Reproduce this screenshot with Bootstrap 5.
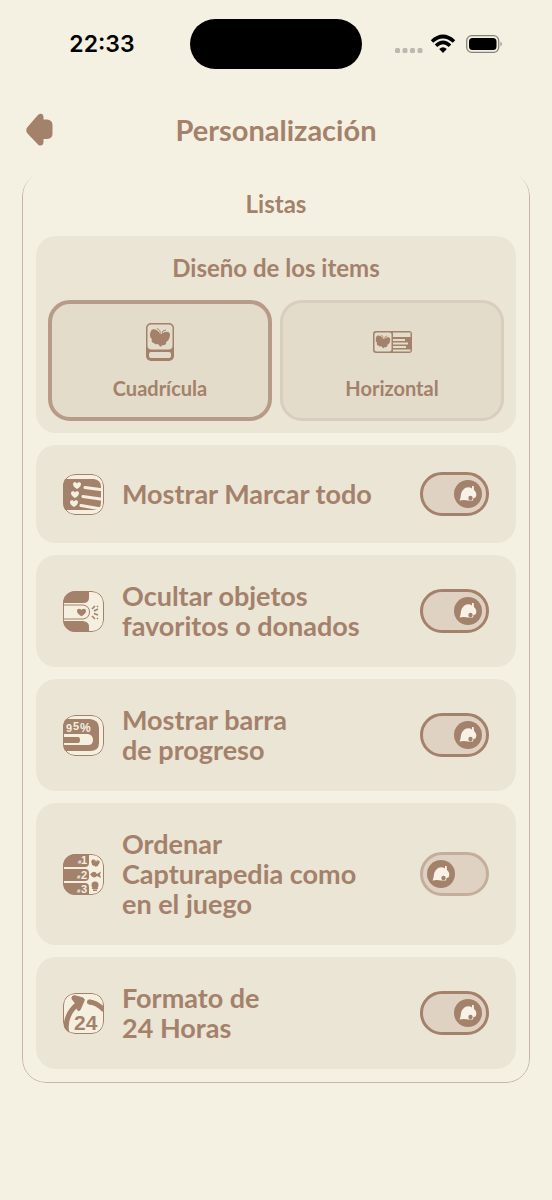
<!DOCTYPE html>
<html lang="es">
<head>
<meta charset="utf-8">
<meta name="viewport" content="width=device-width, initial-scale=1">
<title>Personalización</title>
<link href="https://cdn.jsdelivr.net/npm/bootstrap@5.3.0/dist/css/bootstrap.min.css" rel="stylesheet">
<style>
:root{--paper:#f5f1e2;--sand:#ebe5d5;--brown:#a3816b;--cream:#f5efe0}
body{background:var(--paper);color:var(--brown);font-family:Lato,"Open Sans",sans-serif;font-weight:700;min-height:100vh}
.status{height:88px;color:#000}
.clock{font:600 23px/28px Inter,sans-serif}
.island{width:172px;height:50px;border-radius:25px;background:#000}
.side-l{padding-left:14px}
.side-r{padding-right:16px}
.topbar{height:84px;padding:0 26px}
.topbar h1{font-size:29px;line-height:34px;font-weight:700}
.back{width:30px}
.panel{margin:0 22px;padding:16px 14px 14px}
.panel::before{content:"";position:absolute;inset:0;border:1px solid #c9b5a4;border-radius:24px;pointer-events:none;-webkit-mask-image:linear-gradient(transparent 3px,#000 20px);mask-image:linear-gradient(transparent 3px,#000 20px)}
.panel h2{font-size:24px;line-height:32px;font-weight:700;margin-bottom:16px}
.stack{gap:12px}
.tile{background:var(--sand);border-radius:20px}
.tile-options{padding:16px 12px 12px}
.tile h3{font-size:24px;line-height:32px;font-weight:700;margin-bottom:16px}
.option{height:121px;border:3px solid #d9cdbd;border-radius:22px;background:#e4dcca;font-size:20px;line-height:26px;padding:18px 0 17px;cursor:pointer}
.btn-check:checked + .option{border:4px solid #b79b88;padding:17px 0 16px}
.option svg{height:42px}
.setting{padding:26px 27px;gap:18px;min-height:98px;font-size:27px;line-height:30px;cursor:pointer}
.setting svg{width:41px;height:41px;border-radius:12px;overflow:hidden}
.toggle{appearance:none;width:69px;height:44px;margin:0;border:3px solid #c5ad9b;border-radius:22px;background:#dfd2c2 url("data:image/svg+xml,%3Csvg xmlns='http://www.w3.org/2000/svg' viewBox='0 0 28 28'%3E%3Ccircle cx='14' cy='14' r='14' fill='%23a3816b'/%3E%3Cpath d='M5.500 20.500C7.500 17 6 13 9 10C12 6.500 15.500 7 18 8.500L18 6H19.700L20 10C22.500 12 23 15 21.500 17.500L19.500 18L19 20.500H14Q10 19.500 5.500 20.500Z' fill='%23f7f1e6'/%3E%3Ccircle cx='16.500' cy='18' r='2.200' fill='%23a3816b'/%3E%3C/svg%3E") no-repeat 4px center/28px 28px;cursor:pointer}
.toggle:checked{border-color:var(--brown);background-position:right 4px center}
.st{font-family:"Liberation Sans",sans-serif;font-weight:700;fill:var(--cream)}
</style>
</head>
<body>
<svg class="d-none" aria-hidden="true">
  <defs>
    <symbol id="butterfly" viewBox="0 0 20 19"><path d="M10 6C8 1 2 0 1 3C-1 7 0 10 2 11C1 13 2 15 4 15C5 17 7 16 8 16L10 18.500Q12 19 12 17C15 18 17 15 16 14C19 13 20 9 20 6C19 3 15 3 12 6Z" fill="#a3816b"/><path d="M10 6Q11 2 7 .5M12 6Q12 2 16 2" fill="none" stroke="#a3816b" stroke-width="1"/></symbol>
    <symbol id="heart" viewBox="0 0 8 7"><path d="M4 7C1 5 0 4 0 2C0 0 3-.5 4 1.500C5-.5 8 0 8 2C8 4 7 5 4 7Z"/></symbol>
  </defs>
</svg>

<div class="status d-flex align-items-center">
  <div class="side-l flex-fill w-25 text-center clock">22:33</div>
  <div class="island flex-shrink-0"></div>
  <div class="side-r flex-fill w-25 d-flex justify-content-center">
    <svg width="108" height="22" viewBox="0 0 108 22" role="img" aria-label="Red y batería">
      <g fill="#bdb9ae"><rect y="15" width="5" height="5" rx="1.500"/><rect x="7.500" y="15" width="5" height="5" rx="1.500"/><rect x="15" y="15" width="5" height="5" rx="1.500"/><rect x="22.500" y="15" width="5" height="5" rx="1.500"/></g>
      <g fill="none" stroke="#000" stroke-width="3.600"><path d="M37 8.500Q48 -1.500 59 8.500"/><path d="M41 12.800Q48 6 55 12.800"/></g>
      <path d="M44.200 16Q48 12.500 51.800 16L48 20Z"/>
      <rect x="71.700" y="2.700" width="32" height="16.600" rx="5" fill="none" stroke="#86837b" stroke-width="1.300"/><rect x="74" y="5" width="27.500" height="12" rx="3.500"/><path d="M105.500 8.500Q108 11 105.500 13.500Z" fill="#86837b"/>
    </svg>
  </div>
</div>

<header class="topbar d-flex align-items-center">
  <button type="button" class="back btn p-0 border-0 d-flex" aria-label="Volver">
    <svg width="30" height="36" viewBox="0 0 30 36"><path d="M1.500 15L11.500 3.500C14 .5 17.500 1.500 17.500 5V7.500H21Q26.500 8 26.500 13V22Q26.500 26.500 21 27H17.500V30C17.500 34 13.500 34.500 11.500 32L1.500 21.500Q-1 18 1.500 15Z" fill="#a3816b"/></svg>
  </button>
  <h1 class="flex-fill text-center m-0">Personalización</h1>
  <span class="back"></span>
</header>

<main class="panel position-relative">
  <h2 class="text-center">Listas</h2>
  <form class="stack d-grid">
    <section class="tile tile-options">
      <h3 class="text-center">Diseño de los items</h3>
      <div class="d-flex gap-2">
        <input class="btn-check" type="radio" name="layout" id="grid" checked>
        <label class="option flex-fill w-50 d-flex flex-column align-items-center justify-content-between" for="grid">
          <svg width="30" viewBox="0 0 30 42"><rect x="1" y="2" width="28" height="38" rx="5" fill="#a3816b"/><rect x="2.500" y="3.500" width="25" height="25" rx="4" fill="#e4dcca"/><rect x="4" y="31" width="22" height="6" rx="2" fill="#e4dcca"/><use href="#butterfly" x="5" y="7" width="20" height="19"/></svg>
          Cuadrícula
        </label>
        <input class="btn-check" type="radio" name="layout" id="wide">
        <label class="option flex-fill w-50 d-flex flex-column align-items-center justify-content-between" for="wide">
          <svg width="40" viewBox="0 0 40 42"><rect x="1" y="10" width="39" height="22" rx="3" fill="#a3816b"/><rect x="2.500" y="11.500" width="17" height="19" rx="2" fill="#e4dcca"/><use href="#butterfly" x="3.500" y="13.500" width="15" height="14"/><path d="M21 11.500H38.500V16H21ZM21 18H33V20H21ZM21 21.500H36V23.500H21ZM21 25H34V27H21ZM21 28.500H38.500V30.500H21Z" fill="#e4dcca"/></svg>
          Horizontal
        </label>
      </div>
    </section>

    <label class="tile setting d-flex align-items-center" for="s1">
      <svg class="flex-shrink-0" viewBox="0 0 41 41"><rect width="41" height="41" fill="#f5efe0"/><path d="M0 5H31Q38 6 38 13V28Q38 36 31 36H0Z" fill="#a3816b"/><g fill="#f5efe0"><use href="#heart" x="10" y="8" width="8" height="7"/><use href="#heart" x="8" y="17" width="8" height="7"/><use href="#heart" x="7" y="26" width="8" height="7"/></g><path d="M22 13.500L41 16M20 22.500L41 25.500M18 31.500L38 35" stroke="#f5efe0" stroke-width="3" stroke-linecap="round"/><rect x=".5" y=".5" width="40" height="40" rx="11.500" fill="none" stroke="#a3816b"/></svg>
      <span class="flex-fill">Mostrar Marcar todo</span>
      <input class="toggle flex-shrink-0" type="checkbox" role="switch" id="s1" checked>
    </label>

    <label class="tile setting d-flex align-items-center" for="s2">
      <svg class="flex-shrink-0" viewBox="0 0 41 41"><rect width="41" height="41" fill="#f5efe0"/><path d="M0 0H26V7Q26 12 20 12H0ZM0 30H20Q26 31 26 35V41H0Z" fill="#a3816b"/><path d="M0 14H20Q26.500 15 26.500 21T20 28H0" fill="none" stroke="#a3816b"/><use href="#heart" x="14" y="17.500" width="9" height="8" fill="#a3816b"/><path d="M29 18L32 15M31 20L35 18M31 22.500L35 24M29 25L32 28M34 16L35 15M34 27L35 28" stroke="#a3816b" stroke-width="1.600"/><rect x=".5" y=".5" width="40" height="40" rx="11.500" fill="none" stroke="#a3816b"/></svg>
      <span class="flex-fill">Ocultar objetos<br>favoritos o donados</span>
      <input class="toggle flex-shrink-0" type="checkbox" role="switch" id="s2" checked>
    </label>

    <label class="tile setting d-flex align-items-center" for="s3">
      <svg class="flex-shrink-0" viewBox="0 0 41 41"><rect width="41" height="41" fill="#f5efe0"/><path d="M0 4H27Q36 5 36 13V28Q36 36 27 36H0Z" fill="#a3816b"/><path d="M0 19H25Q30 20 30 25T25 30H0Z" fill="#f5efe0"/><path d="M0 22H15Q17 22 17 25T15 28H0Z" fill="#a3816b"/><g class="st"><text x="3" y="16.500" font-size="11">9</text><text x="10" y="15" font-size="11">5</text><text x="17" y="16.500" font-size="12">%</text></g><rect x=".5" y=".5" width="40" height="40" rx="11.500" fill="none" stroke="#a3816b"/></svg>
      <span class="flex-fill">Mostrar barra<br>de progreso</span>
      <input class="toggle flex-shrink-0" type="checkbox" role="switch" id="s3" checked>
    </label>

    <label class="tile setting d-flex align-items-center" for="s4">
      <svg class="flex-shrink-0" viewBox="0 0 41 41"><rect width="41" height="41" fill="#f5efe0"/><path d="M0 0H26V9Q26 13 22 13H0ZM0 15H22Q26 15 26 19V23Q26 27 22 27H0ZM0 29H22Q26 29 26 33V41H0Z" fill="#a3816b"/><g class="st"><text x="15" y="10" font-size="6">#</text><text x="18" y="10" font-size="11">1</text><text x="14" y="25" font-size="6">#</text><text x="18" y="25" font-size="11">2</text><text x="14" y="39" font-size="6">#</text><text x="18" y="39" font-size="11">3</text></g><g fill="#a3816b"><use href="#butterfly" x="28" y="5" width="9" height="8"/><path d="M27 20.500Q31 15.500 34 20L38 17.500L37 20.500L38 24L34 22Q31 25.500 27 20.500Z"/><circle cx="32" cy="31" r="3.500"/><path d="M29 33.500H35V35H29ZM30 35.500H34V37H30Z"/></g><rect x=".5" y=".5" width="40" height="40" rx="11.500" fill="none" stroke="#a3816b"/></svg>
      <span class="flex-fill">Ordenar<br>Capturapedia como<br>en el juego</span>
      <input class="toggle flex-shrink-0" type="checkbox" role="switch" id="s4">
    </label>

    <label class="tile setting d-flex align-items-center" for="s5">
      <svg class="flex-shrink-0" viewBox="0 0 41 41"><rect width="41" height="41" fill="#f5efe0"/><path d="M4 41Q0 22 16 10M26 9Q33 9 41 17" fill="none" stroke="#a3816b" stroke-width="5"/><circle cx="26.500" cy="9" r="2.500" fill="#a3816b"/><path d="M9 4Q10 2 13 3L20 5Q22 6 21 8L17 17Q15 19 14 16L13 11L9 6Z" fill="#a3816b" stroke="#a3816b"/><text x="11" y="36.500" font-family="Liberation Sans" font-weight="700" font-size="21" fill="#a3816b">24</text><rect x=".5" y=".5" width="40" height="40" rx="11.500" fill="none" stroke="#a3816b"/></svg>
      <span class="flex-fill">Formato de<br>24 Horas</span>
      <input class="toggle flex-shrink-0" type="checkbox" role="switch" id="s5" checked>
    </label>
  </form>
</main>
<script src="https://cdn.jsdelivr.net/npm/bootstrap@5.3.0/dist/js/bootstrap.bundle.min.js"></script>
</body>
</html>
